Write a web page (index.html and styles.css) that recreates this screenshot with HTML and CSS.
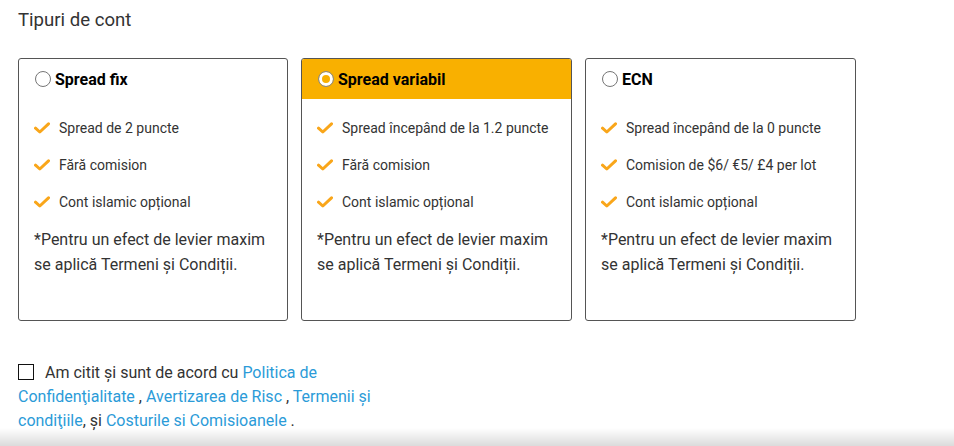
FILE: index.html
```html
<!DOCTYPE html>
<html lang="ro">
<head>
<meta charset="utf-8">
<title>Tipuri de cont</title>
<link rel="stylesheet" href="styles.css">
</head>
<body>
<div class="page">
  <h2 class="title">Tipuri de cont</h2>
  <div class="cards">
    <div class="card">
      <div class="card-head"><span class="radio"></span><span class="card-name">Spread fix</span></div>
      <ul class="features">
        <li><svg class="check" viewBox="0 0 16 12"><path d="M1.5 6.2 L5.8 10 L14.5 1.8" fill="none" stroke="#f9a61a" stroke-width="3" stroke-linecap="round" stroke-linejoin="round"/></svg>Spread de 2 puncte</li>
        <li><svg class="check" viewBox="0 0 16 12"><path d="M1.5 6.2 L5.8 10 L14.5 1.8" fill="none" stroke="#f9a61a" stroke-width="3" stroke-linecap="round" stroke-linejoin="round"/></svg>Fără comision</li>
        <li><svg class="check" viewBox="0 0 16 12"><path d="M1.5 6.2 L5.8 10 L14.5 1.8" fill="none" stroke="#f9a61a" stroke-width="3" stroke-linecap="round" stroke-linejoin="round"/></svg>Cont islamic opțional</li>
      </ul>
      <p class="note">*Pentru un efect de levier maxim se aplică Termeni și Condiții.</p>
    </div>
    <div class="card selected">
      <div class="card-head"><span class="radio"></span><span class="card-name">Spread variabil</span></div>
      <ul class="features">
        <li><svg class="check" viewBox="0 0 16 12"><path d="M1.5 6.2 L5.8 10 L14.5 1.8" fill="none" stroke="#f9a61a" stroke-width="3" stroke-linecap="round" stroke-linejoin="round"/></svg>Spread începând de la 1.2 puncte</li>
        <li><svg class="check" viewBox="0 0 16 12"><path d="M1.5 6.2 L5.8 10 L14.5 1.8" fill="none" stroke="#f9a61a" stroke-width="3" stroke-linecap="round" stroke-linejoin="round"/></svg>Fără comision</li>
        <li><svg class="check" viewBox="0 0 16 12"><path d="M1.5 6.2 L5.8 10 L14.5 1.8" fill="none" stroke="#f9a61a" stroke-width="3" stroke-linecap="round" stroke-linejoin="round"/></svg>Cont islamic opțional</li>
      </ul>
      <p class="note">*Pentru un efect de levier maxim se aplică Termeni și Condiții.</p>
    </div>
    <div class="card">
      <div class="card-head"><span class="radio"></span><span class="card-name">ECN</span></div>
      <ul class="features">
        <li><svg class="check" viewBox="0 0 16 12"><path d="M1.5 6.2 L5.8 10 L14.5 1.8" fill="none" stroke="#f9a61a" stroke-width="3" stroke-linecap="round" stroke-linejoin="round"/></svg>Spread începând de la 0 puncte</li>
        <li><svg class="check" viewBox="0 0 16 12"><path d="M1.5 6.2 L5.8 10 L14.5 1.8" fill="none" stroke="#f9a61a" stroke-width="3" stroke-linecap="round" stroke-linejoin="round"/></svg>Comision de $6/ €5/ £4 per lot</li>
        <li><svg class="check" viewBox="0 0 16 12"><path d="M1.5 6.2 L5.8 10 L14.5 1.8" fill="none" stroke="#f9a61a" stroke-width="3" stroke-linecap="round" stroke-linejoin="round"/></svg>Cont islamic opțional</li>
      </ul>
      <p class="note">*Pentru un efect de levier maxim se aplică Termeni și Condiții.</p>
    </div>
  </div>
  <p class="agree"><span class="box"></span>Am citit și sunt de acord cu <a href="#">Politica de Confidenţialitate</a> , <a href="#">Avertizarea de Risc</a> , <a href="#">Termenii și condiţiile</a>, și <a href="#">Costurile si Comisioanele</a> .</p>
</div>
<div class="shade"></div>
</body>
</html>
```
FILE: styles.css
```css
html, body {
  margin: 0;
  padding: 0;
  background: #fff;
}
body {
  font-family: Roboto, "Liberation Sans", Arial, sans-serif;
  color: #333;
}
.page {
  padding: 8px 18px 0 18px;
}
.title {
  margin: 0;
  font-size: 18.6px;
  font-weight: 400;
  line-height: 24px;
  color: #333;
}
.cards {
  display: flex;
  gap: 13.5px;
  margin-top: 26px;
}
.card {
  box-sizing: border-box;
  width: 269.5px;
  height: 263px;
  border: 1px solid #555;
  border-radius: 3px;
  overflow: hidden;
}
.card + .card {
  width: 270.5px;
}
.card-head {
  height: 40px;
  display: flex;
  align-items: center;
  padding-left: 16px;
  box-sizing: border-box;
}
.card-head .card-name {
  font-weight: 700;
  font-size: 16px;
  color: #000;
  margin-left: 4px;
}
.selected .card-head {
  background: #f9b000;
}
.radio {
  box-sizing: border-box;
  width: 16px;
  height: 16px;
  border-radius: 50%;
  border: 1px solid #767676;
  background: #fff;
  flex: none;
}
.selected .radio {
  border-color: #8a8a8a;
  background: #f9b000;
  box-shadow: inset 0 0 0 3px #fff;
}
.features {
  list-style: none;
  margin: 0;
  padding: 10px 0 0 15px;
}
.features li {
  height: 37px;
  display: flex;
  align-items: center;
  font-size: 14px;
  color: #333;
}
.check {
  width: 16px;
  height: 12px;
  margin-right: 9px;
  flex: none;
}
.note {
  margin: 7px 0 0 15px;
  padding-right: 10px;
  font-size: 16px;
  line-height: 25px;
  color: #333;
}
.agree {
  width: 380px;
  margin: 40px 0 0 0;
  font-size: 16px;
  line-height: 24px;
  color: #333;
}
.agree a {
  color: #2b9bd8;
  text-decoration: none;
}
.box {
  display: inline-block;
  box-sizing: border-box;
  width: 16px;
  height: 16px;
  border: 1.5px solid #111;
  vertical-align: -2px;
  margin-right: 11px;
}
.shade {
  position: fixed;
  left: 0;
  right: 0;
  bottom: 0;
  height: 18px;
  background: linear-gradient(to bottom, rgba(0,0,0,0), rgba(0,0,0,0.14));
  pointer-events: none;
}
```
